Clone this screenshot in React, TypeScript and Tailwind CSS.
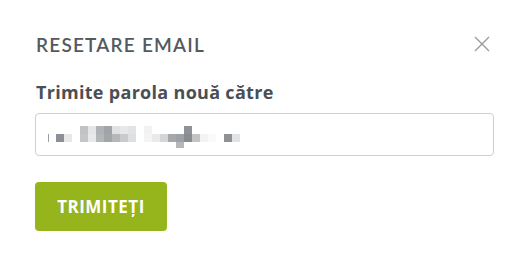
const row1 = [
  { x: 80, c: "bg-[#c0c2c5]" },
  { x: 88, c: "bg-[#e4e5e6]" },
  { x: 96, c: "bg-[#b0b3b6]" },
  { x: 104, c: "bg-[#a0a3a7]" },
  { x: 112, c: "bg-[#e0e1e2]" },
  { x: 120, c: "bg-[#e8e8ea]" },
  { x: 128, c: "bg-[#e2e3e4]" },
  { x: 144, c: "bg-[#f2f2f2]" },
  { x: 184, c: "bg-[#8e9196]" },
];

const row2 = [
  { x: 56, c: "bg-[#8c9096]" },
  { x: 64, c: "bg-[#e6e7e8]" },
  { x: 80, c: "bg-[#c4c6c8]" },
  { x: 88, c: "bg-[#e8e9ea]" },
  { x: 96, c: "bg-[#b4b6b9]" },
  { x: 104, c: "bg-[#a3a6a9]" },
  { x: 112, c: "bg-[#b5b7ba]" },
  { x: 120, c: "bg-[#c8cacc]" },
  { x: 128, c: "bg-[#dedfe0]" },
  { x: 144, c: "bg-[#f4f4f4]" },
  { x: 152, c: "bg-[#e9eaea]" },
  { x: 160, c: "bg-[#d4d5d7]" },
  { x: 168, c: "bg-[#a5a8ab]" },
  { x: 176, c: "bg-[#9ea1a5]" },
  { x: 184, c: "bg-[#888c91]" },
  { x: 192, c: "bg-[#c1c3c5]" },
  { x: 200, c: "bg-[#f3f3f3]" },
  { x: 208, c: "bg-[#fafafa]" },
  { x: 224, c: "bg-[#8e9196]" },
  { x: 232, c: "bg-[#e2e3e4]" },
];

const row3 = [{ x: 176, c: "bg-[#b5b7ba]" }];

// blurred email, drawn as a row of mosaic cells (cell = 8px)
const MosaicRow = ({ cells }: { cells: { x: number; c: string }[] }) => {
  const all: string[] = [];
  for (let x = 56; x <= 232; x += 8) {
    const hit = cells.find((cell) => cell.x === x);
    all.push(hit ? hit.c : "bg-transparent");
  }
  return (
    <div className="flex h-2">
      {all.map((c, i) => (
        <div key={i} className={`w-2 h-2 ${c}`} />
      ))}
    </div>
  );
};

export default function App() {
  return (
    <div className="w-[531px] h-[261px] bg-white font-['Open_Sans',sans-serif]">
      <div className="pl-9 pr-[41px] pt-[33px]">
        <div className="flex items-start justify-between">
          <h2 className="font-['Lato',sans-serif] text-[19px] leading-[24px] tracking-[1.2px] text-[#55595f] font-semibold">
            RESETARE EMAIL
          </h2>
          <button className="mt-[3px] w-4 h-4 text-[#9b9b9b]" aria-label="close">
            <svg viewBox="0 0 16 16" width="16" height="16" fill="none" stroke="currentColor" strokeWidth="1.4">
              <path d="M1 1 L15 15 M15 1 L1 15" />
            </svg>
          </button>
        </div>

        <label className="block mt-[23px] text-[18px] leading-[24px] tracking-[0.3px] font-bold text-[#4a4e55]">
          Trimite parola nouă către
        </label>

        <div className="mt-[9px] -ml-px mr-[-4px] h-[43px] border border-[#cfcfcf] rounded-[4px] flex items-start pt-[12px]">
          <div className="flex items-start pl-[12px]">
            <div className="w-px h-2 bg-[#9a9da1] mt-2" />
            <div className="ml-[7px] flex flex-col">
              <MosaicRow cells={row1} />
              <MosaicRow cells={row2} />
              <div className="h-[6px] overflow-hidden">
                <MosaicRow cells={row3} />
              </div>
            </div>
          </div>
        </div>

        <button className="mt-[26px] -ml-px w-[132px] h-[49px] rounded-[4px] bg-[#96b41c] text-white font-bold text-[17px] tracking-[0.5px]">
          TRIMITEȚI
        </button>
      </div>
    </div>
  );
}
